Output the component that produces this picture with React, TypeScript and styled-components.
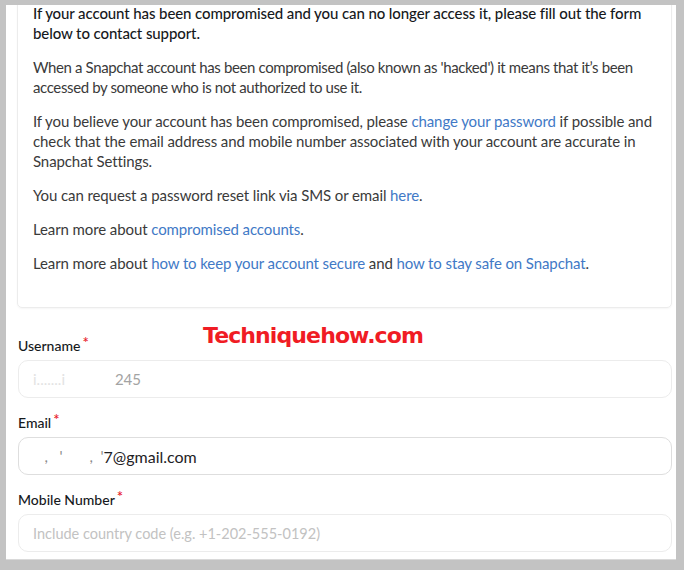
import React from 'react';
import styled, { createGlobalStyle } from 'styled-components';

const GlobalStyle = createGlobalStyle`
    html, body {
        margin: 0;
        padding: 0;
        background: #c3c3c3;
    }
    body {
        font-family: Lato, "Noto Sans", sans-serif;
    }
`;

const Frame = styled.div`
    position: relative;
    margin: 5px 8px 0 6px;
    height: 555px;
    background: #ffffff;
    overflow: hidden;
    border-bottom: 1px solid #d9d9d9;
    box-sizing: border-box;
`;

const Content = styled.div`
    display: flex;
    flex-direction: column;
    padding: 0 4px 0 11px;
`;

const InfoCard = styled.div`
    margin-top: -17px;
    padding: 14px 12px 20px 15px;
    border: 1px solid #ececec;
    border-radius: 5px;
    box-shadow: 0 1px 2px rgba(0, 0, 0, 0.04);
`;

const Para = styled.p<{ $lead?: boolean; $tight?: boolean }>`
    margin: 0 0 14px;
    font-size: 15px;
    line-height: 20px;
    letter-spacing: ${(p) => (p.$tight ? '-0.38px' : '-0.1px')};
    color: ${(p) => (p.$lead ? '#16191c' : '#3a3a3a')};
    font-weight: ${(p) => (p.$lead ? 500 : 400)};
`;

const Link = styled.a`
    color: #4179c6;
    text-decoration: none;
`;

const Form = styled.form`
    display: flex;
    flex-direction: column;
    padding: 27px 0 0 1px;
`;

const Field = styled.div`
    display: flex;
    flex-direction: column;
    margin-bottom: 14px;
`;

const Label = styled.label`
    font-size: 14px;
    line-height: 20px;
    font-weight: 500;
    color: #16191c;
    margin-bottom: 4px;
`;

const Required = styled.span`
    color: #e8202a;
    font-size: 15px;
    margin-left: 2px;
    position: relative;
    top: -3px;
`;

const InputBox = styled.div<{ $strong?: boolean }>`
    height: 38px;
    box-sizing: border-box;
    border: 1px solid ${(p) => (p.$strong ? '#dedede' : '#ececec')};
    border-radius: 10px;
    display: flex;
    align-items: center;
    padding: 0 14px;
`;

const Value = styled.span<{ $tone: 'muted' | 'dark' | 'placeholder' }>`
    font-size: ${(p) => (p.$tone === 'dark' ? '16px' : p.$tone === 'placeholder' ? '14.5px' : '15px')};
    color: ${(p) =>
        p.$tone === 'dark' ? '#1e2124' : p.$tone === 'muted' ? '#a3a3a3' : '#c2c2c2'};
    white-space: pre;
`;

const Redacted = styled.span<{ $faint?: boolean }>`
    font-size: 15px;
    color: ${(p) => (p.$faint ? '#e3e3e3' : '#8a8a8a')};
    white-space: pre;
`;

const Watermark = styled.div`
    position: absolute;
    left: 197px;
    top: 318px;
    font-family: "DejaVu Sans", Verdana, sans-serif;
    font-weight: 700;
    font-size: 22px;
    letter-spacing: -0.9px;
    color: #f01c24;
`;

const App: React.FC = () => {
    return (
        <>
            <GlobalStyle />
            <Frame>
                <Content>
                    <InfoCard>
                        <Para $lead>
                            If your account has been compromised and you can no longer access it, please fill out the form below to contact support.
                        </Para>
                        <Para $tight>
                            When a Snapchat account has been compromised (also known as 'hacked') it means that it’s been accessed by someone who is not authorized to use it.
                        </Para>
                        <Para>
                            If you believe your account has been compromised, please <Link href="#">change your password</Link> if possible and check that the email address and mobile number associated with your account are accurate in Snapchat Settings.
                        </Para>
                        <Para>
                            You can request a password reset link via SMS or email <Link href="#">here</Link>.
                        </Para>
                        <Para>
                            Learn more about <Link href="#">compromised accounts</Link>.
                        </Para>
                        <Para>
                            Learn more about <Link href="#">how to keep your account secure</Link> and <Link href="#">how to stay safe on Snapchat</Link>.
                        </Para>
                    </InfoCard>
                    <Form>
                        <Field>
                            <Label>Username<Required>*</Required></Label>
                            <InputBox>
                                <Redacted $faint>{'i.......i             '}</Redacted>
                                <Value $tone="muted">245</Value>
                            </InputBox>
                        </Field>
                        <Field>
                            <Label>Email<Required>*</Required></Label>
                            <InputBox $strong>
                                <Redacted>{'   ,   \'       ,  \''}</Redacted>
                                <Value $tone="dark">7@gmail.com</Value>
                            </InputBox>
                        </Field>
                        <Field>
                            <Label>Mobile Number<Required>*</Required></Label>
                            <InputBox>
                                <Value $tone="placeholder">Include country code (e.g. +1-202-555-0192)</Value>
                            </InputBox>
                        </Field>
                    </Form>
                </Content>
                <Watermark>Techniquehow.com</Watermark>
            </Frame>
        </>
    );
};

export default App;
